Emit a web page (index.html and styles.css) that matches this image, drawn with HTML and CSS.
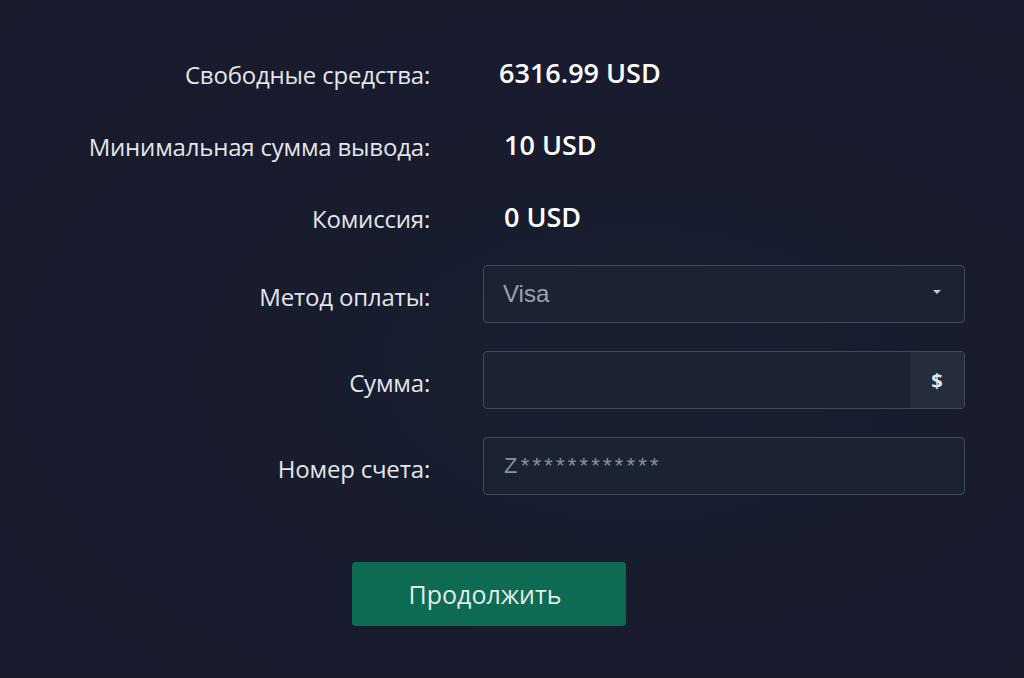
FILE: index.html
```html
<!DOCTYPE html>
<html lang="ru">
<head>
    <meta charset="UTF-8">
    <meta name="viewport" content="width=device-width, initial-scale=1.0">
    <title>Вывод средств</title>
    <link rel="stylesheet" href="styles.css">
</head>
<body>

    <form class="withdraw">
        <div class="row info">
            <span class="label">Свободные средства:</span>
            <span class="value">6316.99 USD</span>
        </div>
        <div class="row info">
            <span class="label">Минимальная сумма вывода:</span>
            <span class="value v-shift">10 USD</span>
        </div>
        <div class="row info">
            <span class="label">Комиссия:</span>
            <span class="value v-shift">0 USD</span>
        </div>

        <div class="row field">
            <label class="label" for="method">Метод оплаты:</label>
            <div class="control select">
                <span id="method">Visa</span>
                <svg class="caret" width="10" height="6" viewBox="0 0 10 6"><path d="M1 1h8L5 5z" fill="#c9ced6"/></svg>
            </div>
        </div>
        <div class="row field">
            <label class="label" for="amount">Сумма:</label>
            <div class="control group">
                <input type="text" id="amount">
                <span class="addon">$</span>
            </div>
        </div>
        <div class="row field">
            <label class="label" for="account">Номер счета:</label>
            <div class="control">
                <input type="text" id="account" class="masked" placeholder="Z************">
            </div>
        </div>

        <div class="actions">
            <button type="button">Продолжить</button>
        </div>
    </form>

</body>
</html>
```

FILE: styles.css
```css
html {
    background-color: #191a2d;
}
body {
    margin: 0;
    min-height: 678px;
    background: radial-gradient(ellipse at 62% 55%, #172030 0%, #181c2d 45%, #1a1a2d 100%);
    font-family: "Open Sans", "Noto Sans", sans-serif;
    color: #e6e8ec;
}
.withdraw {
    padding-top: 36px;
}
.row {
    display: grid;
    grid-template-columns: 430px 482px;
    column-gap: 53px;
    align-items: center;
}
.row.info {
    height: 72px;
}
.label {
    text-align: right;
    font-size: 24px;
    color: #e3e5ea;
    padding-top: 5px;
    letter-spacing: -0.2px;
}
.value {
    font-size: 27px;
    font-weight: 600;
    color: #ffffff;
    margin-left: 16px;
}
.v-shift {
    margin-left: 21px;
}
.row.field {
    height: 58px;
    margin-top: 28px;
}
.info + .field {
    margin-top: 13px;
}
.control {
    box-sizing: border-box;
    height: 58px;
    border: 1px solid #434a5a;
    border-radius: 4px;
    background-color: #1b2232;
    display: flex;
    align-items: center;
    overflow: hidden;
}
.select {
    justify-content: space-between;
    padding: 0 22px 0 19px;
    font-family: "Liberation Sans", Arial, sans-serif;
    font-size: 24px;
    color: #9ba1ac;
}
.caret {
    margin-top: -4px;
}
.control input {
    flex: 1;
    height: 100%;
    border: none;
    background: transparent;
    padding: 0 20px;
    font-family: "Liberation Sans", Arial, sans-serif;
    font-size: 22px;
    color: #c9ced6;
    outline: none;
}
.control input.masked {
    letter-spacing: 3.2px;
}
.control input::placeholder {
    color: #8a909b;
}
.addon {
    width: 54px;
    height: 100%;
    display: flex;
    align-items: center;
    justify-content: center;
    background-color: #252d3c;
    font-size: 20px;
    font-weight: 700;
    color: #e6e8ec;
}
.actions {
    padding-left: 352px;
    margin-top: 67px;
}
button {
    width: 274px;
    height: 64px;
    border: none;
    border-radius: 4px;
    background-color: #0e6b53;
    color: #e3ece8;
    font-family: "Open Sans", "Noto Sans", sans-serif;
    font-size: 25px;
    padding-right: 14px;
    cursor: pointer;
}
button:hover {
    background-color: #0f7459;
}
```
